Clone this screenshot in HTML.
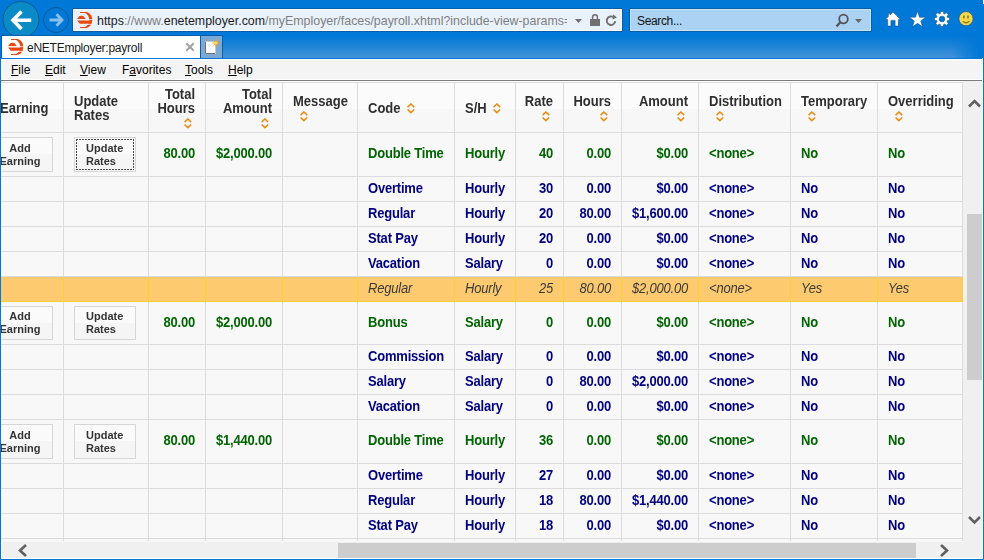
<!DOCTYPE html><html><head><meta charset="utf-8"><style>
*{box-sizing:border-box}
html,body{margin:0;padding:0}
body{width:984px;height:560px;overflow:hidden;position:relative;background:#0078d7;font-family:"Liberation Sans", sans-serif}
.a{position:absolute}
.t{position:absolute;white-space:nowrap;font-size:13px;line-height:15px;font-weight:bold;letter-spacing:-0.2px;transform:scaleY(1.07);transform-origin:0 12px}
.hd{color:#2f2f2f;letter-spacing:0}
.g{color:#006400}
.n{color:#000080}
.i{font-weight:normal;font-style:italic;color:#3a3a3a}
.r{text-align:right}
.btn{position:absolute;border:1px solid #d6d6d6;background:linear-gradient(#fafafa 0,#fafafa 50%,#f5f5f5 50%,#f5f5f5 100%)}
.bt{position:absolute;white-space:nowrap;font-size:11px;line-height:13px;font-weight:bold;color:#333}
.menu{position:absolute;top:63px;font-size:12px;line-height:14px;color:#000}
.menu u{text-decoration:underline;text-underline-offset:1px}

</style></head><body>
<div class="a" style="left:1px;top:32px;width:981px;height:26px;background:linear-gradient(#0078d7 0,#0078d7 4px,#4492d8 100%);-webkit-mask-image:linear-gradient(to right,#000 0,#000 950px,transparent 978px)"></div>
<svg class="a" style="left:0;top:0" width="72" height="40" viewBox="0 0 72 40">
<circle cx="21" cy="19.5" r="18" fill="#0b8bc6" stroke="#0b5a94" stroke-width="1"/>
<path d="M13 20.2 H31.2 M21.5 11.5 L13 20.2 L21.5 28.9" fill="none" stroke="#fff" stroke-width="3.6" stroke-linecap="butt" stroke-linejoin="miter"/>
<circle cx="56" cy="20" r="12.5" fill="none" stroke="#0b5a94" stroke-width="1"/>
<path d="M49.5 20 H62 M56.5 14.3 L62 20 L56.5 25.7" fill="none" stroke="#8cc0ec" stroke-width="2.8"/>
</svg>
<div class="a" style="left:72px;top:8px;width:551px;height:24px;background:#e9f2fb;border:1px solid #0a5ea8;box-shadow:inset 0 0 0 1px #fff"></div>
<svg class="a" style="left:74px;top:10px" width="20" height="20" viewBox="0 0 20 20"><path d="M6 2 H12 C16.2 2.5 18.3 6 18.3 10 C18.3 14 16.2 17.5 12 18 H6 V17 H11.2 C13.8 15.5 15.2 13 15.2 10 C15.2 7 13.8 4.5 11.2 3 H6 Z" fill="#e8490f"/>
<path d="M3 9 L5.5 6 Q7.3 5.4 9.3 6 L11.8 9 Z" fill="#e8490f"/>
<path d="M3 10.6 H16 V13.7 H5.8 Z" fill="#e8490f"/><rect x="11.8" y="9.4" width="8" height="0.7" fill="#e9f2fb"/><rect x="12.5" y="13.9" width="8" height="0.8" fill="#e9f2fb"/></svg>
<div class="a" style="left:97px;top:14px;width:470px;height:16px;overflow:hidden;font-size:12.4px;line-height:15px;color:#808080;white-space:nowrap"><span style="color:#1a1a1a">https</span>://www.<span style="color:#1a1a1a">enetemployer.com</span>/myEmployer/faces/payroll.xhtml?include-view-params=</div>
<svg class="a" style="left:570px;top:10px" width="52" height="20" viewBox="0 0 52 20">
<path d="M5 9 L12 9 L8.5 13 Z" fill="#707070"/>
<rect x="20" y="9" width="10" height="7" fill="#707070"/>
<path d="M22.6 9.5 V7.2 A2.4 2.4 0 0 1 27.4 7.2 V9.5" fill="none" stroke="#707070" stroke-width="1.5"/>
<g transform="translate(0,1)"><path d="M43.6 6.2 A4.3 4.3 0 1 0 45.3 10.2" fill="none" stroke="#707070" stroke-width="1.9"/>
<path d="M43.2 3.2 L46.8 6.6 L42.6 8.4 Z" fill="#707070"/></g>
</svg>
<div class="a" style="left:629px;top:8px;width:243px;height:24px;background:#abd1f3;border:1px solid #0a5ea8;box-shadow:inset 0 0 0 1px #c6e1f8"></div>
<div class="a" style="left:637px;top:14px;font-size:12px;line-height:15px;color:#111;letter-spacing:-0.35px">Search...</div>
<svg class="a" style="left:834px;top:12px" width="30" height="18" viewBox="0 0 30 18">
<circle cx="9.5" cy="7" r="4.3" fill="none" stroke="#555" stroke-width="1.8"/>
<path d="M6.5 10 L2.5 14.5" stroke="#555" stroke-width="2.2"/>
<path d="M21 7 L28 7 L24.5 11 Z" fill="#666"/>
</svg>
<svg class="a" style="left:880px;top:8px" width="104" height="22" viewBox="0 0 104 22">
<g stroke="#0a4f8f" stroke-width="0.9" stroke-opacity="0.6">
<path d="M13 4 L20.6 11.6 L18.3 11.6 L18.3 18 L15.1 18 L15.1 12.4 L10.9 12.4 L10.9 18 L7.7 18 L7.7 11.6 L5.2 11.6 L8.4 8.4 L8.4 5.6 L10 5.6 L10 7 Z" fill="#fff"/>
<path d="M37.50 3.30 L39.50 9.15 L45.68 9.24 L40.73 12.95 L42.55 18.86 L37.50 15.30 L32.45 18.86 L34.27 12.95 L29.32 9.24 L35.50 9.15 Z" fill="#fff"/>
<path transform="translate(62,11) scale(1.05)" d="M-1.50 -5.19 L-1.50 -7.14 L1.50 -7.14 L1.50 -5.19 A5.4 5.4 0 0 1 2.61 -4.73 L3.99 -6.11 L6.11 -3.99 L4.73 -2.61 A5.4 5.4 0 0 1 5.19 -1.50 L7.14 -1.50 L7.14 1.50 L5.19 1.50 A5.4 5.4 0 0 1 4.73 2.61 L6.11 3.99 L3.99 6.11 L2.61 4.73 A5.4 5.4 0 0 1 1.50 5.19 L1.50 7.14 L-1.50 7.14 L-1.50 5.19 A5.4 5.4 0 0 1 -2.61 4.73 L-3.99 6.11 L-6.11 3.99 L-4.73 2.61 A5.4 5.4 0 0 1 -5.19 1.50 L-7.14 1.50 L-7.14 -1.50 L-5.19 -1.50 A5.4 5.4 0 0 1 -4.73 -2.61 L-6.11 -3.99 L-3.99 -6.11 L-2.61 -4.73 A5.4 5.4 0 0 1 -1.50 -5.19 Z M2.7 0 A2.7 2.7 0 1 0 -2.7 0 A2.7 2.7 0 1 0 2.7 0 Z" fill="#fff" fill-rule="evenodd"/>
</g>
<circle cx="86" cy="10.7" r="7.1" fill="#f5d948" stroke="#2a5f96" stroke-width="0.8"/>
<ellipse cx="83.9" cy="8.9" rx="0.9" ry="1.6" fill="#8c7a22"/><ellipse cx="88" cy="8.9" rx="0.9" ry="1.6" fill="#8c7a22"/>
<path d="M82.8 13.2 Q86 16.3 89.4 13.2" fill="none" stroke="#8c7a22" stroke-width="1.3"/>
</svg>
<div class="a" style="left:1px;top:35px;width:200px;height:23px;background:#0a5ea8"></div>
<div class="a" style="left:2px;top:36px;width:198px;height:22px;background:#fff"></div>
<svg class="a" style="left:5px;top:37px" width="20" height="20" viewBox="0 0 20 20"><path d="M6 2 H12 C16.2 2.5 18.3 6 18.3 10 C18.3 14 16.2 17.5 12 18 H6 V17 H11.2 C13.8 15.5 15.2 13 15.2 10 C15.2 7 13.8 4.5 11.2 3 H6 Z" fill="#e8490f"/>
<path d="M3 9 L5.5 6 Q7.3 5.4 9.3 6 L11.8 9 Z" fill="#e8490f"/>
<path d="M3 10.6 H16 V13.7 H5.8 Z" fill="#e8490f"/><rect x="11.8" y="9.4" width="8" height="0.7" fill="#fff"/><rect x="12.5" y="13.9" width="8" height="0.8" fill="#fff"/></svg>
<div class="a" style="left:27px;top:41px;font-size:12px;line-height:15px;color:#1a1a1a;letter-spacing:-0.25px;white-space:nowrap">eNETEmployer:payroll</div>
<svg class="a" style="left:184px;top:41px" width="12" height="12" viewBox="0 0 12 12"><path d="M2.3 2.3 L9.7 9.7 M9.7 2.3 L2.3 9.7" stroke="#a3a3a3" stroke-width="2"/></svg>
<div class="a" style="left:200px;top:35px;width:23px;height:23px;background:#0a5ea8"></div>
<div class="a" style="left:201px;top:36px;width:21px;height:22px;background:#7ca8d4"></div>
<svg class="a" style="left:201px;top:36px" width="21" height="22" viewBox="0 0 21 22">
<rect x="4" y="5" width="11" height="13" fill="#fbfbfb"/>
<path d="M4.5 5 V17.5 H15" fill="none" stroke="#6f6f6f" stroke-width="1"/>
<path d="M4 5.5 H15 M14.5 5 V18" fill="none" stroke="#c8c8c8" stroke-width="1"/>
<g stroke="#f2a41e" stroke-width="1"><path d="M15 3.5 V10.5 M11.5 7 H18.5 M12.6 4.6 L17.4 9.4 M17.4 4.6 L12.6 9.4"/></g>
<circle cx="15" cy="7" r="1.5" fill="#fcd75a"/>
</svg>
<div class="a" style="left:1px;top:58px;width:982px;height:1px;background:#0078d7"></div>
<div class="a" style="left:1px;top:59px;width:982px;height:21px;background:#f4f4f4;border-top:1px solid #fff"></div>
<div class="a" style="left:1px;top:79px;width:982px;height:1px;background:#fff"></div>
<div class="a" style="left:1px;top:80px;width:982px;height:1px;background:#7b7b7b"></div>
<div class="menu" style="left:11px"><u>F</u>ile</div>
<div class="menu" style="left:45px"><u>E</u>dit</div>
<div class="menu" style="left:80px"><u>V</u>iew</div>
<div class="menu" style="left:122px">F<u>a</u>vorites</div>
<div class="menu" style="left:185px"><u>T</u>ools</div>
<div class="menu" style="left:228px"><u>H</u>elp</div>
<div class="a" style="left:1px;top:81px;width:981px;height:478px;background:#f8f8f8;overflow:hidden;will-change:transform">
<div class="a" style="left:0;top:0;width:981px;height:1px;background:#fff"></div>
<div class="a" style="left:0;top:2px;width:961px;height:49px;background:linear-gradient(#fbfbfb 0,#fbfbfb 53%,#f7f7f7 53%,#f7f7f7 100%)"></div>
<div class="a" style="left:0;top:196px;width:961px;height:24px;background:#fdca70"></div>
<div class="a" style="left:0;top:1px;width:961px;height:1px;background:#dcdcdc"></div>
<div class="a" style="left:0;top:51px;width:961px;height:1px;background:#dcdcdc"></div>
<div class="a" style="left:0;top:95px;width:961px;height:1px;background:#dcdcdc"></div>
<div class="a" style="left:0;top:120px;width:961px;height:1px;background:#dcdcdc"></div>
<div class="a" style="left:0;top:145px;width:961px;height:1px;background:#dcdcdc"></div>
<div class="a" style="left:0;top:170px;width:961px;height:1px;background:#dcdcdc"></div>
<div class="a" style="left:0;top:195px;width:961px;height:1px;background:#dcdcdc"></div>
<div class="a" style="left:0;top:220px;width:961px;height:1px;background:#fdd02f"></div>
<div class="a" style="left:0;top:263px;width:961px;height:1px;background:#dcdcdc"></div>
<div class="a" style="left:0;top:288px;width:961px;height:1px;background:#dcdcdc"></div>
<div class="a" style="left:0;top:313px;width:961px;height:1px;background:#dcdcdc"></div>
<div class="a" style="left:0;top:338px;width:961px;height:1px;background:#dcdcdc"></div>
<div class="a" style="left:0;top:382px;width:961px;height:1px;background:#dcdcdc"></div>
<div class="a" style="left:0;top:407px;width:961px;height:1px;background:#dcdcdc"></div>
<div class="a" style="left:0;top:432px;width:961px;height:1px;background:#dcdcdc"></div>
<div class="a" style="left:0;top:457px;width:961px;height:1px;background:#dcdcdc"></div>
<div class="a" style="left:62px;top:1px;width:1px;height:459px;background:#dcdcdc"></div>
<div class="a" style="left:62px;top:196px;width:1px;height:25px;background:#fdd02f"></div>
<div class="a" style="left:147px;top:1px;width:1px;height:459px;background:#dcdcdc"></div>
<div class="a" style="left:147px;top:196px;width:1px;height:25px;background:#fdd02f"></div>
<div class="a" style="left:204px;top:1px;width:1px;height:459px;background:#dcdcdc"></div>
<div class="a" style="left:204px;top:196px;width:1px;height:25px;background:#fdd02f"></div>
<div class="a" style="left:281px;top:1px;width:1px;height:459px;background:#dcdcdc"></div>
<div class="a" style="left:281px;top:196px;width:1px;height:25px;background:#fdd02f"></div>
<div class="a" style="left:356px;top:1px;width:1px;height:459px;background:#dcdcdc"></div>
<div class="a" style="left:356px;top:196px;width:1px;height:25px;background:#fdd02f"></div>
<div class="a" style="left:453px;top:1px;width:1px;height:459px;background:#dcdcdc"></div>
<div class="a" style="left:453px;top:196px;width:1px;height:25px;background:#fdd02f"></div>
<div class="a" style="left:514px;top:1px;width:1px;height:459px;background:#dcdcdc"></div>
<div class="a" style="left:514px;top:196px;width:1px;height:25px;background:#fdd02f"></div>
<div class="a" style="left:562px;top:1px;width:1px;height:459px;background:#dcdcdc"></div>
<div class="a" style="left:562px;top:196px;width:1px;height:25px;background:#fdd02f"></div>
<div class="a" style="left:620px;top:1px;width:1px;height:459px;background:#dcdcdc"></div>
<div class="a" style="left:620px;top:196px;width:1px;height:25px;background:#fdd02f"></div>
<div class="a" style="left:697px;top:1px;width:1px;height:459px;background:#dcdcdc"></div>
<div class="a" style="left:697px;top:196px;width:1px;height:25px;background:#fdd02f"></div>
<div class="a" style="left:789px;top:1px;width:1px;height:459px;background:#dcdcdc"></div>
<div class="a" style="left:789px;top:196px;width:1px;height:25px;background:#fdd02f"></div>
<div class="a" style="left:876px;top:1px;width:1px;height:459px;background:#dcdcdc"></div>
<div class="a" style="left:876px;top:196px;width:1px;height:25px;background:#fdd02f"></div>
<div class="a" style="left:961px;top:1px;width:1px;height:459px;background:#dcdcdc"></div>
<div class="a" style="left:961px;top:196px;width:1px;height:25px;background:#fdd02f"></div>
<div class="t hd" style="left:-1px;top:20px">Earning</div>
<div class="t hd" style="left:73px;top:13px">Update</div>
<div class="t hd" style="left:73px;top:27px">Rates</div>
<div class="t hd r" style="right:787px;top:6px">Total</div>
<div class="t hd r" style="right:787px;top:20px">Hours</div>
<svg class="a" style="left:183px;top:37px" width="8" height="11" viewBox="0 0 8 11"><path d="M0.6 4.1 L3.9 1 L7.2 4.1 M0.6 6.5 L3.9 9.6 L7.2 6.5" fill="none" stroke="#e88a10" stroke-width="1.5"/></svg>
<div class="t hd r" style="right:710px;top:6px">Total</div>
<div class="t hd r" style="right:710px;top:20px">Amount</div>
<svg class="a" style="left:260px;top:37px" width="8" height="11" viewBox="0 0 8 11"><path d="M0.6 4.1 L3.9 1 L7.2 4.1 M0.6 6.5 L3.9 9.6 L7.2 6.5" fill="none" stroke="#e88a10" stroke-width="1.5"/></svg>
<div class="t hd" style="left:292px;top:13px">Message</div>
<svg class="a" style="left:299px;top:30px" width="8" height="11" viewBox="0 0 8 11"><path d="M0.6 4.1 L3.9 1 L7.2 4.1 M0.6 6.5 L3.9 9.6 L7.2 6.5" fill="none" stroke="#e88a10" stroke-width="1.5"/></svg>
<div class="t hd" style="left:367px;top:20px">Code</div>
<svg class="a" style="left:406px;top:22px" width="8" height="11" viewBox="0 0 8 11"><path d="M0.6 4.1 L3.9 1 L7.2 4.1 M0.6 6.5 L3.9 9.6 L7.2 6.5" fill="none" stroke="#e88a10" stroke-width="1.5"/></svg>
<div class="t hd" style="left:464px;top:20px">S/H</div>
<svg class="a" style="left:492px;top:22px" width="8" height="11" viewBox="0 0 8 11"><path d="M0.6 4.1 L3.9 1 L7.2 4.1 M0.6 6.5 L3.9 9.6 L7.2 6.5" fill="none" stroke="#e88a10" stroke-width="1.5"/></svg>
<div class="t hd r" style="right:429px;top:13px">Rate</div>
<svg class="a" style="left:541px;top:30px" width="8" height="11" viewBox="0 0 8 11"><path d="M0.6 4.1 L3.9 1 L7.2 4.1 M0.6 6.5 L3.9 9.6 L7.2 6.5" fill="none" stroke="#e88a10" stroke-width="1.5"/></svg>
<div class="t hd r" style="right:371px;top:13px">Hours</div>
<svg class="a" style="left:599px;top:30px" width="8" height="11" viewBox="0 0 8 11"><path d="M0.6 4.1 L3.9 1 L7.2 4.1 M0.6 6.5 L3.9 9.6 L7.2 6.5" fill="none" stroke="#e88a10" stroke-width="1.5"/></svg>
<div class="t hd r" style="right:294px;top:13px">Amount</div>
<svg class="a" style="left:676px;top:30px" width="8" height="11" viewBox="0 0 8 11"><path d="M0.6 4.1 L3.9 1 L7.2 4.1 M0.6 6.5 L3.9 9.6 L7.2 6.5" fill="none" stroke="#e88a10" stroke-width="1.5"/></svg>
<div class="t hd" style="left:708px;top:13px">Distribution</div>
<svg class="a" style="left:715px;top:30px" width="8" height="11" viewBox="0 0 8 11"><path d="M0.6 4.1 L3.9 1 L7.2 4.1 M0.6 6.5 L3.9 9.6 L7.2 6.5" fill="none" stroke="#e88a10" stroke-width="1.5"/></svg>
<div class="t hd" style="left:800px;top:13px">Temporary</div>
<svg class="a" style="left:807px;top:30px" width="8" height="11" viewBox="0 0 8 11"><path d="M0.6 4.1 L3.9 1 L7.2 4.1 M0.6 6.5 L3.9 9.6 L7.2 6.5" fill="none" stroke="#e88a10" stroke-width="1.5"/></svg>
<div class="t hd" style="left:887px;top:13px">Overriding</div>
<svg class="a" style="left:894px;top:30px" width="8" height="11" viewBox="0 0 8 11"><path d="M0.6 4.1 L3.9 1 L7.2 4.1 M0.6 6.5 L3.9 9.6 L7.2 6.5" fill="none" stroke="#e88a10" stroke-width="1.5"/></svg>
<div class="t g" style="left:367px;top:65px">Double Time</div>
<div class="t g" style="left:464px;top:65px">Hourly</div>
<div class="t g r" style="right:429px;top:65px">40</div>
<div class="t g r" style="right:371px;top:65px">0.00</div>
<div class="t g r" style="right:294px;top:65px">$0.00</div>
<div class="t g" style="left:708px;top:65px">&lt;none&gt;</div>
<div class="t g" style="left:800px;top:65px">No</div>
<div class="t g" style="left:887px;top:65px">No</div>
<div class="t g r" style="right:787px;top:65px">80.00</div>
<div class="t g r" style="right:710px;top:65px">$2,000.00</div>
<div class="btn" style="left:-10px;top:56px;width:62px;height:35px"></div>
<div class="bt" style="left:-12px;top:61px;width:62px;text-align:center">Add<br>Earning</div>
<div class="btn" style="left:73px;top:56px;width:62px;height:35px"></div>
<svg class="a" style="left:75px;top:58px" width="58" height="31" viewBox="0 0 58 31"><path d="M0 0.5 H58 M0 30.5 H58 M0.5 0 V31 M57.5 0 V31" stroke="#4a4a4a" stroke-width="1" stroke-dasharray="2 1"/></svg>
<div class="bt" style="left:85px;top:61px">Update<br>Rates</div>
<div class="t n" style="left:367px;top:100px">Overtime</div>
<div class="t n" style="left:464px;top:100px">Hourly</div>
<div class="t n r" style="right:429px;top:100px">30</div>
<div class="t n r" style="right:371px;top:100px">0.00</div>
<div class="t n r" style="right:294px;top:100px">$0.00</div>
<div class="t n" style="left:708px;top:100px">&lt;none&gt;</div>
<div class="t n" style="left:800px;top:100px">No</div>
<div class="t n" style="left:887px;top:100px">No</div>
<div class="t n" style="left:367px;top:125px">Regular</div>
<div class="t n" style="left:464px;top:125px">Hourly</div>
<div class="t n r" style="right:429px;top:125px">20</div>
<div class="t n r" style="right:371px;top:125px">80.00</div>
<div class="t n r" style="right:294px;top:125px">$1,600.00</div>
<div class="t n" style="left:708px;top:125px">&lt;none&gt;</div>
<div class="t n" style="left:800px;top:125px">No</div>
<div class="t n" style="left:887px;top:125px">No</div>
<div class="t n" style="left:367px;top:150px">Stat Pay</div>
<div class="t n" style="left:464px;top:150px">Hourly</div>
<div class="t n r" style="right:429px;top:150px">20</div>
<div class="t n r" style="right:371px;top:150px">0.00</div>
<div class="t n r" style="right:294px;top:150px">$0.00</div>
<div class="t n" style="left:708px;top:150px">&lt;none&gt;</div>
<div class="t n" style="left:800px;top:150px">No</div>
<div class="t n" style="left:887px;top:150px">No</div>
<div class="t n" style="left:367px;top:175px">Vacation</div>
<div class="t n" style="left:464px;top:175px">Salary</div>
<div class="t n r" style="right:429px;top:175px">0</div>
<div class="t n r" style="right:371px;top:175px">0.00</div>
<div class="t n r" style="right:294px;top:175px">$0.00</div>
<div class="t n" style="left:708px;top:175px">&lt;none&gt;</div>
<div class="t n" style="left:800px;top:175px">No</div>
<div class="t n" style="left:887px;top:175px">No</div>
<div class="t i" style="left:367px;top:200px">Regular</div>
<div class="t i" style="left:464px;top:200px">Hourly</div>
<div class="t i r" style="right:429px;top:200px">25</div>
<div class="t i r" style="right:371px;top:200px">80.00</div>
<div class="t i r" style="right:294px;top:200px">$2,000.00</div>
<div class="t i" style="left:708px;top:200px">&lt;none&gt;</div>
<div class="t i" style="left:800px;top:200px">Yes</div>
<div class="t i" style="left:887px;top:200px">Yes</div>
<div class="t g" style="left:367px;top:234px">Bonus</div>
<div class="t g" style="left:464px;top:234px">Salary</div>
<div class="t g r" style="right:429px;top:234px">0</div>
<div class="t g r" style="right:371px;top:234px">0.00</div>
<div class="t g r" style="right:294px;top:234px">$0.00</div>
<div class="t g" style="left:708px;top:234px">&lt;none&gt;</div>
<div class="t g" style="left:800px;top:234px">No</div>
<div class="t g" style="left:887px;top:234px">No</div>
<div class="t g r" style="right:787px;top:234px">80.00</div>
<div class="t g r" style="right:710px;top:234px">$2,000.00</div>
<div class="btn" style="left:-10px;top:225px;width:62px;height:34px"></div>
<div class="bt" style="left:-12px;top:229px;width:62px;text-align:center">Add<br>Earning</div>
<div class="btn" style="left:73px;top:225px;width:62px;height:34px"></div>
<div class="bt" style="left:85px;top:229px">Update<br>Rates</div>
<div class="t n" style="left:367px;top:268px">Commission</div>
<div class="t n" style="left:464px;top:268px">Salary</div>
<div class="t n r" style="right:429px;top:268px">0</div>
<div class="t n r" style="right:371px;top:268px">0.00</div>
<div class="t n r" style="right:294px;top:268px">$0.00</div>
<div class="t n" style="left:708px;top:268px">&lt;none&gt;</div>
<div class="t n" style="left:800px;top:268px">No</div>
<div class="t n" style="left:887px;top:268px">No</div>
<div class="t n" style="left:367px;top:293px">Salary</div>
<div class="t n" style="left:464px;top:293px">Salary</div>
<div class="t n r" style="right:429px;top:293px">0</div>
<div class="t n r" style="right:371px;top:293px">80.00</div>
<div class="t n r" style="right:294px;top:293px">$2,000.00</div>
<div class="t n" style="left:708px;top:293px">&lt;none&gt;</div>
<div class="t n" style="left:800px;top:293px">No</div>
<div class="t n" style="left:887px;top:293px">No</div>
<div class="t n" style="left:367px;top:318px">Vacation</div>
<div class="t n" style="left:464px;top:318px">Salary</div>
<div class="t n r" style="right:429px;top:318px">0</div>
<div class="t n r" style="right:371px;top:318px">0.00</div>
<div class="t n r" style="right:294px;top:318px">$0.00</div>
<div class="t n" style="left:708px;top:318px">&lt;none&gt;</div>
<div class="t n" style="left:800px;top:318px">No</div>
<div class="t n" style="left:887px;top:318px">No</div>
<div class="t g" style="left:367px;top:352px">Double Time</div>
<div class="t g" style="left:464px;top:352px">Hourly</div>
<div class="t g r" style="right:429px;top:352px">36</div>
<div class="t g r" style="right:371px;top:352px">0.00</div>
<div class="t g r" style="right:294px;top:352px">$0.00</div>
<div class="t g" style="left:708px;top:352px">&lt;none&gt;</div>
<div class="t g" style="left:800px;top:352px">No</div>
<div class="t g" style="left:887px;top:352px">No</div>
<div class="t g r" style="right:787px;top:352px">80.00</div>
<div class="t g r" style="right:710px;top:352px">$1,440.00</div>
<div class="btn" style="left:-10px;top:343px;width:62px;height:35px"></div>
<div class="bt" style="left:-12px;top:348px;width:62px;text-align:center">Add<br>Earning</div>
<div class="btn" style="left:73px;top:343px;width:62px;height:35px"></div>
<div class="bt" style="left:85px;top:348px">Update<br>Rates</div>
<div class="t n" style="left:367px;top:387px">Overtime</div>
<div class="t n" style="left:464px;top:387px">Hourly</div>
<div class="t n r" style="right:429px;top:387px">27</div>
<div class="t n r" style="right:371px;top:387px">0.00</div>
<div class="t n r" style="right:294px;top:387px">$0.00</div>
<div class="t n" style="left:708px;top:387px">&lt;none&gt;</div>
<div class="t n" style="left:800px;top:387px">No</div>
<div class="t n" style="left:887px;top:387px">No</div>
<div class="t n" style="left:367px;top:412px">Regular</div>
<div class="t n" style="left:464px;top:412px">Hourly</div>
<div class="t n r" style="right:429px;top:412px">18</div>
<div class="t n r" style="right:371px;top:412px">80.00</div>
<div class="t n r" style="right:294px;top:412px">$1,440.00</div>
<div class="t n" style="left:708px;top:412px">&lt;none&gt;</div>
<div class="t n" style="left:800px;top:412px">No</div>
<div class="t n" style="left:887px;top:412px">No</div>
<div class="t n" style="left:367px;top:437px">Stat Pay</div>
<div class="t n" style="left:464px;top:437px">Hourly</div>
<div class="t n r" style="right:429px;top:437px">18</div>
<div class="t n r" style="right:371px;top:437px">0.00</div>
<div class="t n r" style="right:294px;top:437px">$0.00</div>
<div class="t n" style="left:708px;top:437px">&lt;none&gt;</div>
<div class="t n" style="left:800px;top:437px">No</div>
<div class="t n" style="left:887px;top:437px">No</div>
</div>
<div class="a" style="left:963px;top:81px;width:19px;height:477px;background:#f0f0f0"></div>
<div class="a" style="left:967px;top:214px;width:15px;height:166px;background:#cdcdcd"></div>
<svg class="a" style="left:963px;top:95px" width="19" height="14" viewBox="0 0 19 14"><path d="M6 11.5 L11.5 6 L17 11.5" fill="none" stroke="#606060" stroke-width="2.6"/></svg>
<svg class="a" style="left:963px;top:513px" width="19" height="14" viewBox="0 0 19 14"><path d="M6 4 L11.5 9.5 L17 4" fill="none" stroke="#606060" stroke-width="2.6"/></svg>
<div class="a" style="left:1px;top:542px;width:981px;height:16px;background:#f0f0f0"></div>
<div class="a" style="left:338px;top:543px;width:578px;height:15px;background:#cdcdcd"></div>
<svg class="a" style="left:14px;top:542px" width="16" height="16" viewBox="0 0 16 16"><path d="M12 3 L6 8.5 L12 14" fill="none" stroke="#606060" stroke-width="2.6"/></svg>
<svg class="a" style="left:937px;top:542px" width="16" height="16" viewBox="0 0 16 16"><path d="M4 3 L10 8.5 L4 14" fill="none" stroke="#606060" stroke-width="2.6"/></svg>
<div class="a" style="left:1px;top:542px;width:1px;height:17px;background:#fff"></div>
<div class="a" style="left:982px;top:58px;width:1px;height:501px;background:#fff"></div>
<div class="a" style="left:1px;top:558px;width:982px;height:1px;background:#fff"></div>
<div class="a" style="left:0;top:58px;width:1px;height:502px;background:#0078d7"></div>
<div class="a" style="left:983px;top:58px;width:1px;height:502px;background:#0078d7"></div>
<div class="a" style="left:0;top:559px;width:984px;height:1px;background:#0078d7"></div>
<div class="a" style="left:983px;top:0;width:1px;height:4px;background:#fff"></div>
</body></html>
